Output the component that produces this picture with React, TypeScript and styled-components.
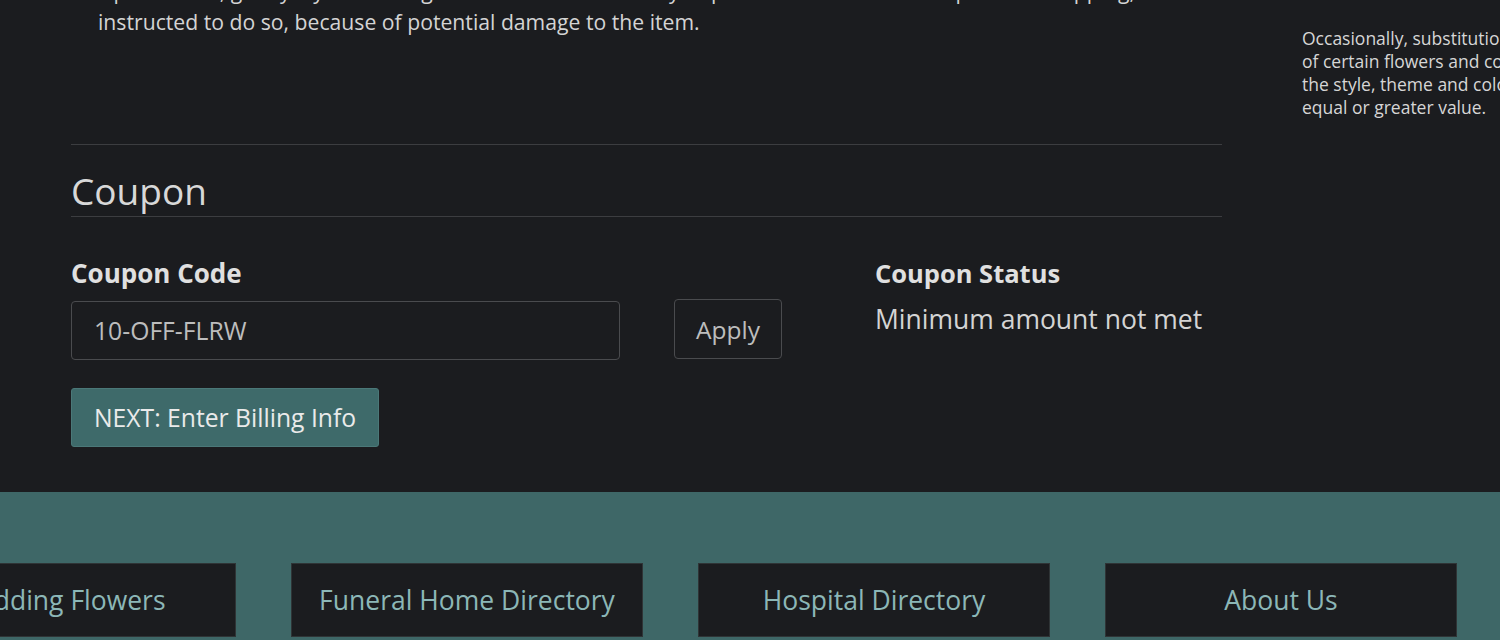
import React from 'react'
import styled, { createGlobalStyle } from 'styled-components'

const GlobalStyle = createGlobalStyle`
  html, body {
    margin: 0;
    padding: 0;
    background: #1b1c1f;
    overflow: hidden;
  }
  body {
    font-family: "Open Sans", "Liberation Sans", sans-serif;
    color: #d4d4d4;
  }
`

const footerLinks = [
  'Wedding Flowers',
  'Funeral Home Directory',
  'Hospital Directory',
  'About Us',
]

const App: React.FC = () => {
  return (
    <>
      <GlobalStyle />
      <Page>
        <Content>
          <Main>
            <CareList>
              <li>
                Upon arrival, gently lay the arrangement flat and do not try to pull it out of the box or open the wrapping,
                <br />
                instructed to do so, because of potential damage to the item.
              </li>
            </CareList>

            <Section>
              <SectionTitle>Coupon</SectionTitle>
            </Section>

            <CouponForm>
              <Field>
                <Label htmlFor="coupon-code">Coupon Code</Label>
                <CodeInput id="coupon-code" defaultValue="10-OFF-FLRW" />
              </Field>
              <ApplyButton type="button">Apply</ApplyButton>
              <Status>
                <StatusLabel>Coupon Status</StatusLabel>
                <StatusText>Minimum amount not met</StatusText>
              </Status>
            </CouponForm>

            <NextButton type="button">NEXT: Enter Billing Info</NextButton>
          </Main>

          <Aside>
            Occasionally, substitutions must be made due to the availability
            <br />
            of certain flowers and containers. We will always maintain
            <br />
            the style, theme and color scheme of your order with items of
            <br />
            equal or greater value.
          </Aside>
        </Content>

        <Footer>
          <FooterLinks>
            {footerLinks.map((link) => (
              <FooterLink key={link} href="#">
                {link}
              </FooterLink>
            ))}
          </FooterLinks>
        </Footer>
      </Page>
    </>
  )
}

const Page = styled.div`
  width: 1500px;
  height: 640px;
  overflow: hidden;
`

const Content = styled.div`
  display: flex;
  align-items: flex-start;
`

const Main = styled.main`
  width: 1151px;
  margin-left: 71px;
  flex-shrink: 0;
`

const CareList = styled.ul`
  list-style: none;
  margin: -25px 0 0;
  padding: 0 0 0 27px;
  font-size: 21.2px;
  line-height: 31px;
  white-space: nowrap;
  color: #d4d4d4;
`

const Section = styled.div`
  margin-top: 107px;
  border-top: 1px solid #3c3d40;
  border-bottom: 1px solid #3c3d40;
  padding: 24px 0 3px;
`

const SectionTitle = styled.h2`
  margin: 0;
  font-size: 37px;
  font-weight: 400;
  line-height: 44px;
  color: #d8d8d8;
`

const CouponForm = styled.div`
  display: grid;
  grid-template-columns: 549px 108px auto;
  column-gap: 54px;
  align-items: end;
  margin-top: 40px;
`

const Field = styled.div`
  display: flex;
  flex-direction: column;
  gap: 12px;
`

const Label = styled.label`
  font-size: 26px;
  font-weight: 700;
  line-height: 32px;
  color: #e0e0e0;
`

const CodeInput = styled.input`
  box-sizing: border-box;
  height: 59px;
  padding: 0 22px;
  background: #1b1c1f;
  border: 1px solid #4a4b4e;
  border-radius: 4px;
  font-family: inherit;
  font-size: 24.7px;
  color: #bdbdbd;
  outline: none;
`

const ApplyButton = styled.button`
  box-sizing: border-box;
  height: 60px;
  margin-bottom: 1px;
  padding: 0;
  background: transparent;
  border: 1px solid #4a4b4e;
  border-radius: 4px;
  font-family: inherit;
  font-size: 24.5px;
  color: #bdbdbd;
  cursor: pointer;
`

const Status = styled.div`
  display: flex;
  flex-direction: column;
  gap: 14px;
  margin-left: 39px;
  align-self: start;
`

const StatusLabel = styled.div`
  font-size: 25.5px;
  font-weight: 700;
  line-height: 32px;
  color: #e0e0e0;
`

const StatusText = styled.div`
  font-size: 26.5px;
  line-height: 32px;
  color: #d4d4d4;
`

const NextButton = styled.button`
  box-sizing: border-box;
  height: 59px;
  margin-top: 28px;
  padding: 0 22px;
  background: #3e6a6a;
  border: 1px solid #4b7878;
  border-radius: 3px;
  font-family: inherit;
  font-size: 24.7px;
  color: #eaeaea;
  cursor: pointer;
`

const Aside = styled.aside`
  margin: 27px 0 0 80px;
  font-size: 17.5px;
  font-weight: 500;
  line-height: 23px;
  white-space: nowrap;
  color: #d6d6d6;
`

const Footer = styled.footer`
  margin-top: 45px;
  padding-top: 71px;
  background: #3e6767;
  height: 200px;
`

const FooterLinks = styled.nav`
  display: flex;
  gap: 55px;
  margin-left: -116px;
`

const FooterLink = styled.a`
  box-sizing: border-box;
  display: flex;
  align-items: center;
  justify-content: center;
  flex: 0 0 352px;
  height: 74px;
  background: #1b1c1f;
  border: 1px solid #2f3436;
  font-size: 26.5px;
  color: #8cb7b7;
  text-decoration: none;
`

export default App
